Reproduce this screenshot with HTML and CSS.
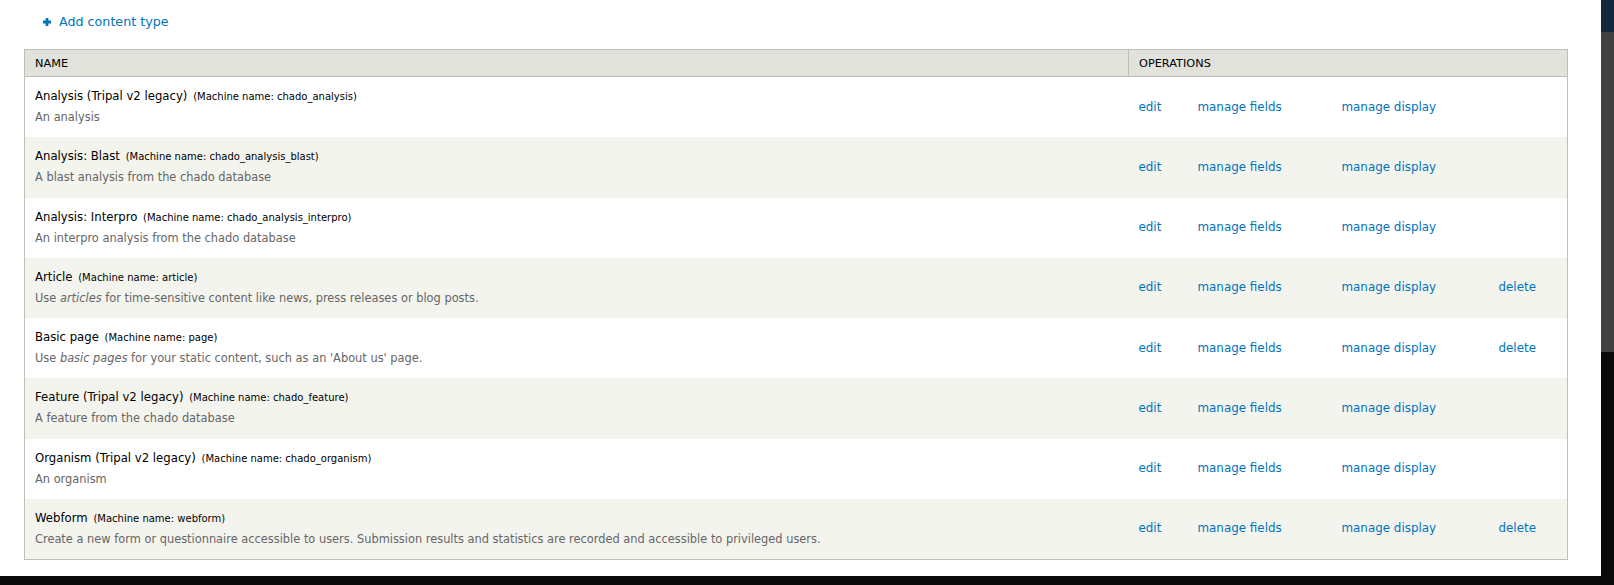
FILE: index.html
```html
<!DOCTYPE html>
<html lang="en">
<head>
<meta charset="utf-8">
<title>Content types</title>
<link rel="stylesheet" href="styles.css">
</head>
<body>
<div class="screen">
  <main class="content">
    <ul class="action-links">
      <li>
        <a href="#" class="action-add">
          <svg class="plus" width="8" height="8" viewBox="0 0 8 8" aria-hidden="true"><path d="M2.6 0h2.8v2.6H8v2.8H5.4V8H2.6V5.4H0V2.6h2.6z"/></svg>
          <span>Add content type</span>
        </a>
      </li>
    </ul>

    <table class="types">
      <colgroup>
        <col class="c-name">
        <col class="c-edit">
        <col class="c-fields">
        <col class="c-display">
        <col class="c-delete">
      </colgroup>
      <thead>
        <tr><th>Name</th><th colspan="4">Operations</th></tr>
      </thead>
      <tbody>
        <tr class="odd">
          <td class="name"><div class="title">Analysis (Tripal v2 legacy) <small>(Machine name: chado_analysis)</small></div><div class="description">An analysis</div></td>
          <td><a href="#">edit</a></td><td><a href="#">manage fields</a></td><td><a href="#">manage display</a></td><td></td>
        </tr>
        <tr class="even">
          <td class="name"><div class="title">Analysis: Blast <small>(Machine name: chado_analysis_blast)</small></div><div class="description">A blast analysis from the chado database</div></td>
          <td><a href="#">edit</a></td><td><a href="#">manage fields</a></td><td><a href="#">manage display</a></td><td></td>
        </tr>
        <tr class="odd">
          <td class="name"><div class="title">Analysis: Interpro <small>(Machine name: chado_analysis_interpro)</small></div><div class="description">An interpro analysis from the chado database</div></td>
          <td><a href="#">edit</a></td><td><a href="#">manage fields</a></td><td><a href="#">manage display</a></td><td></td>
        </tr>
        <tr class="even">
          <td class="name"><div class="title">Article <small>(Machine name: article)</small></div><div class="description">Use <em>articles</em> for time-sensitive content like news, press releases or blog posts.</div></td>
          <td><a href="#">edit</a></td><td><a href="#">manage fields</a></td><td><a href="#">manage display</a></td><td><a href="#">delete</a></td>
        </tr>
        <tr class="odd">
          <td class="name"><div class="title">Basic page <small>(Machine name: page)</small></div><div class="description">Use <em>basic pages</em> for your static content, such as an 'About us' page.</div></td>
          <td><a href="#">edit</a></td><td><a href="#">manage fields</a></td><td><a href="#">manage display</a></td><td><a href="#">delete</a></td>
        </tr>
        <tr class="even">
          <td class="name"><div class="title">Feature (Tripal v2 legacy) <small>(Machine name: chado_feature)</small></div><div class="description">A feature from the chado database</div></td>
          <td><a href="#">edit</a></td><td><a href="#">manage fields</a></td><td><a href="#">manage display</a></td><td></td>
        </tr>
        <tr class="odd">
          <td class="name"><div class="title">Organism (Tripal v2 legacy) <small>(Machine name: chado_organism)</small></div><div class="description">An organism</div></td>
          <td><a href="#">edit</a></td><td><a href="#">manage fields</a></td><td><a href="#">manage display</a></td><td></td>
        </tr>
        <tr class="even">
          <td class="name"><div class="title">Webform <small>(Machine name: webform)</small></div><div class="description">Create a new form or questionnaire accessible to users. Submission results and statistics are recorded and accessible to privileged users.</div></td>
          <td><a href="#">edit</a></td><td><a href="#">manage fields</a></td><td><a href="#">manage display</a></td><td><a href="#">delete</a></td>
        </tr>
      </tbody>
    </table>
  </main>

  <aside class="side-strip">
    <div class="strip-top"></div>
    <div class="strip-mid"></div>
  </aside>
</div>
</body>
</html>
```

FILE: styles.css
```css
html, body {
  margin: 0;
  padding: 0;
  height: 100%;
}

body {
  background: #0a0a0a;
  font-family: "DejaVu Sans", Verdana, sans-serif;
  color: #000;
}

a {
  color: #0074bd;
  text-decoration: none;
}

.screen {
  display: flex;
  height: 576px;
}

.content {
  flex: 1;
  background: #fff;
  padding: 11px 0 0 24px;
  box-sizing: border-box;
}

/* Right-hand window strip */
.side-strip {
  width: 13px;
  display: flex;
  flex-direction: column;
}
.strip-top {
  height: 32px;
  background: #13283b;
}
.strip-mid {
  height: 320px;
  background: #414141;
}

/* Action links */
.action-links {
  list-style: none;
  margin: 0 0 19px 19px;
  padding: 0;
}
.action-add {
  display: inline-flex;
  align-items: center;
  gap: 8px;
  font-size: 12.7px;
  line-height: 16px;
}
.plus {
  fill: #0074bd;
  margin-top: 1px;
}

/* Content type table */
.types {
  width: 1543px;
  table-layout: fixed;
  border-collapse: collapse;
  border: 1px solid #bebfb9;
}
.c-name { width: 1104px; }
.c-edit { width: 59px; }
.c-fields { width: 144px; }
.c-display { width: 157px; }
.c-delete { width: 79px; }

.types th {
  background: #e1e2dc;
  border: 1px solid #bebfb9;
  font-weight: normal;
  text-transform: uppercase;
  text-align: left;
  font-size: 11.3px;
  line-height: 16px;
  padding: 6px 10px 4px;
}

.types tbody tr.odd { background: #fff; }
.types tbody tr.even { background: #f3f4ee; }

.types td {
  padding: 11px 10px 12.25px;
  vertical-align: middle;
  font-size: 11.9px;
  line-height: 16px;
}

.title {
  height: 16px;
  font-size: 11.7px;
  line-height: 16px;
  white-space: nowrap;
}
.title small {
  font-size: 10px;
  line-height: 1;
  margin-left: 2px;
}
.description {
  margin-top: 5px;
  color: #666;
  font-size: 11.4px;
  line-height: 16px;
}
.description em {
  font-style: italic;
}
```
